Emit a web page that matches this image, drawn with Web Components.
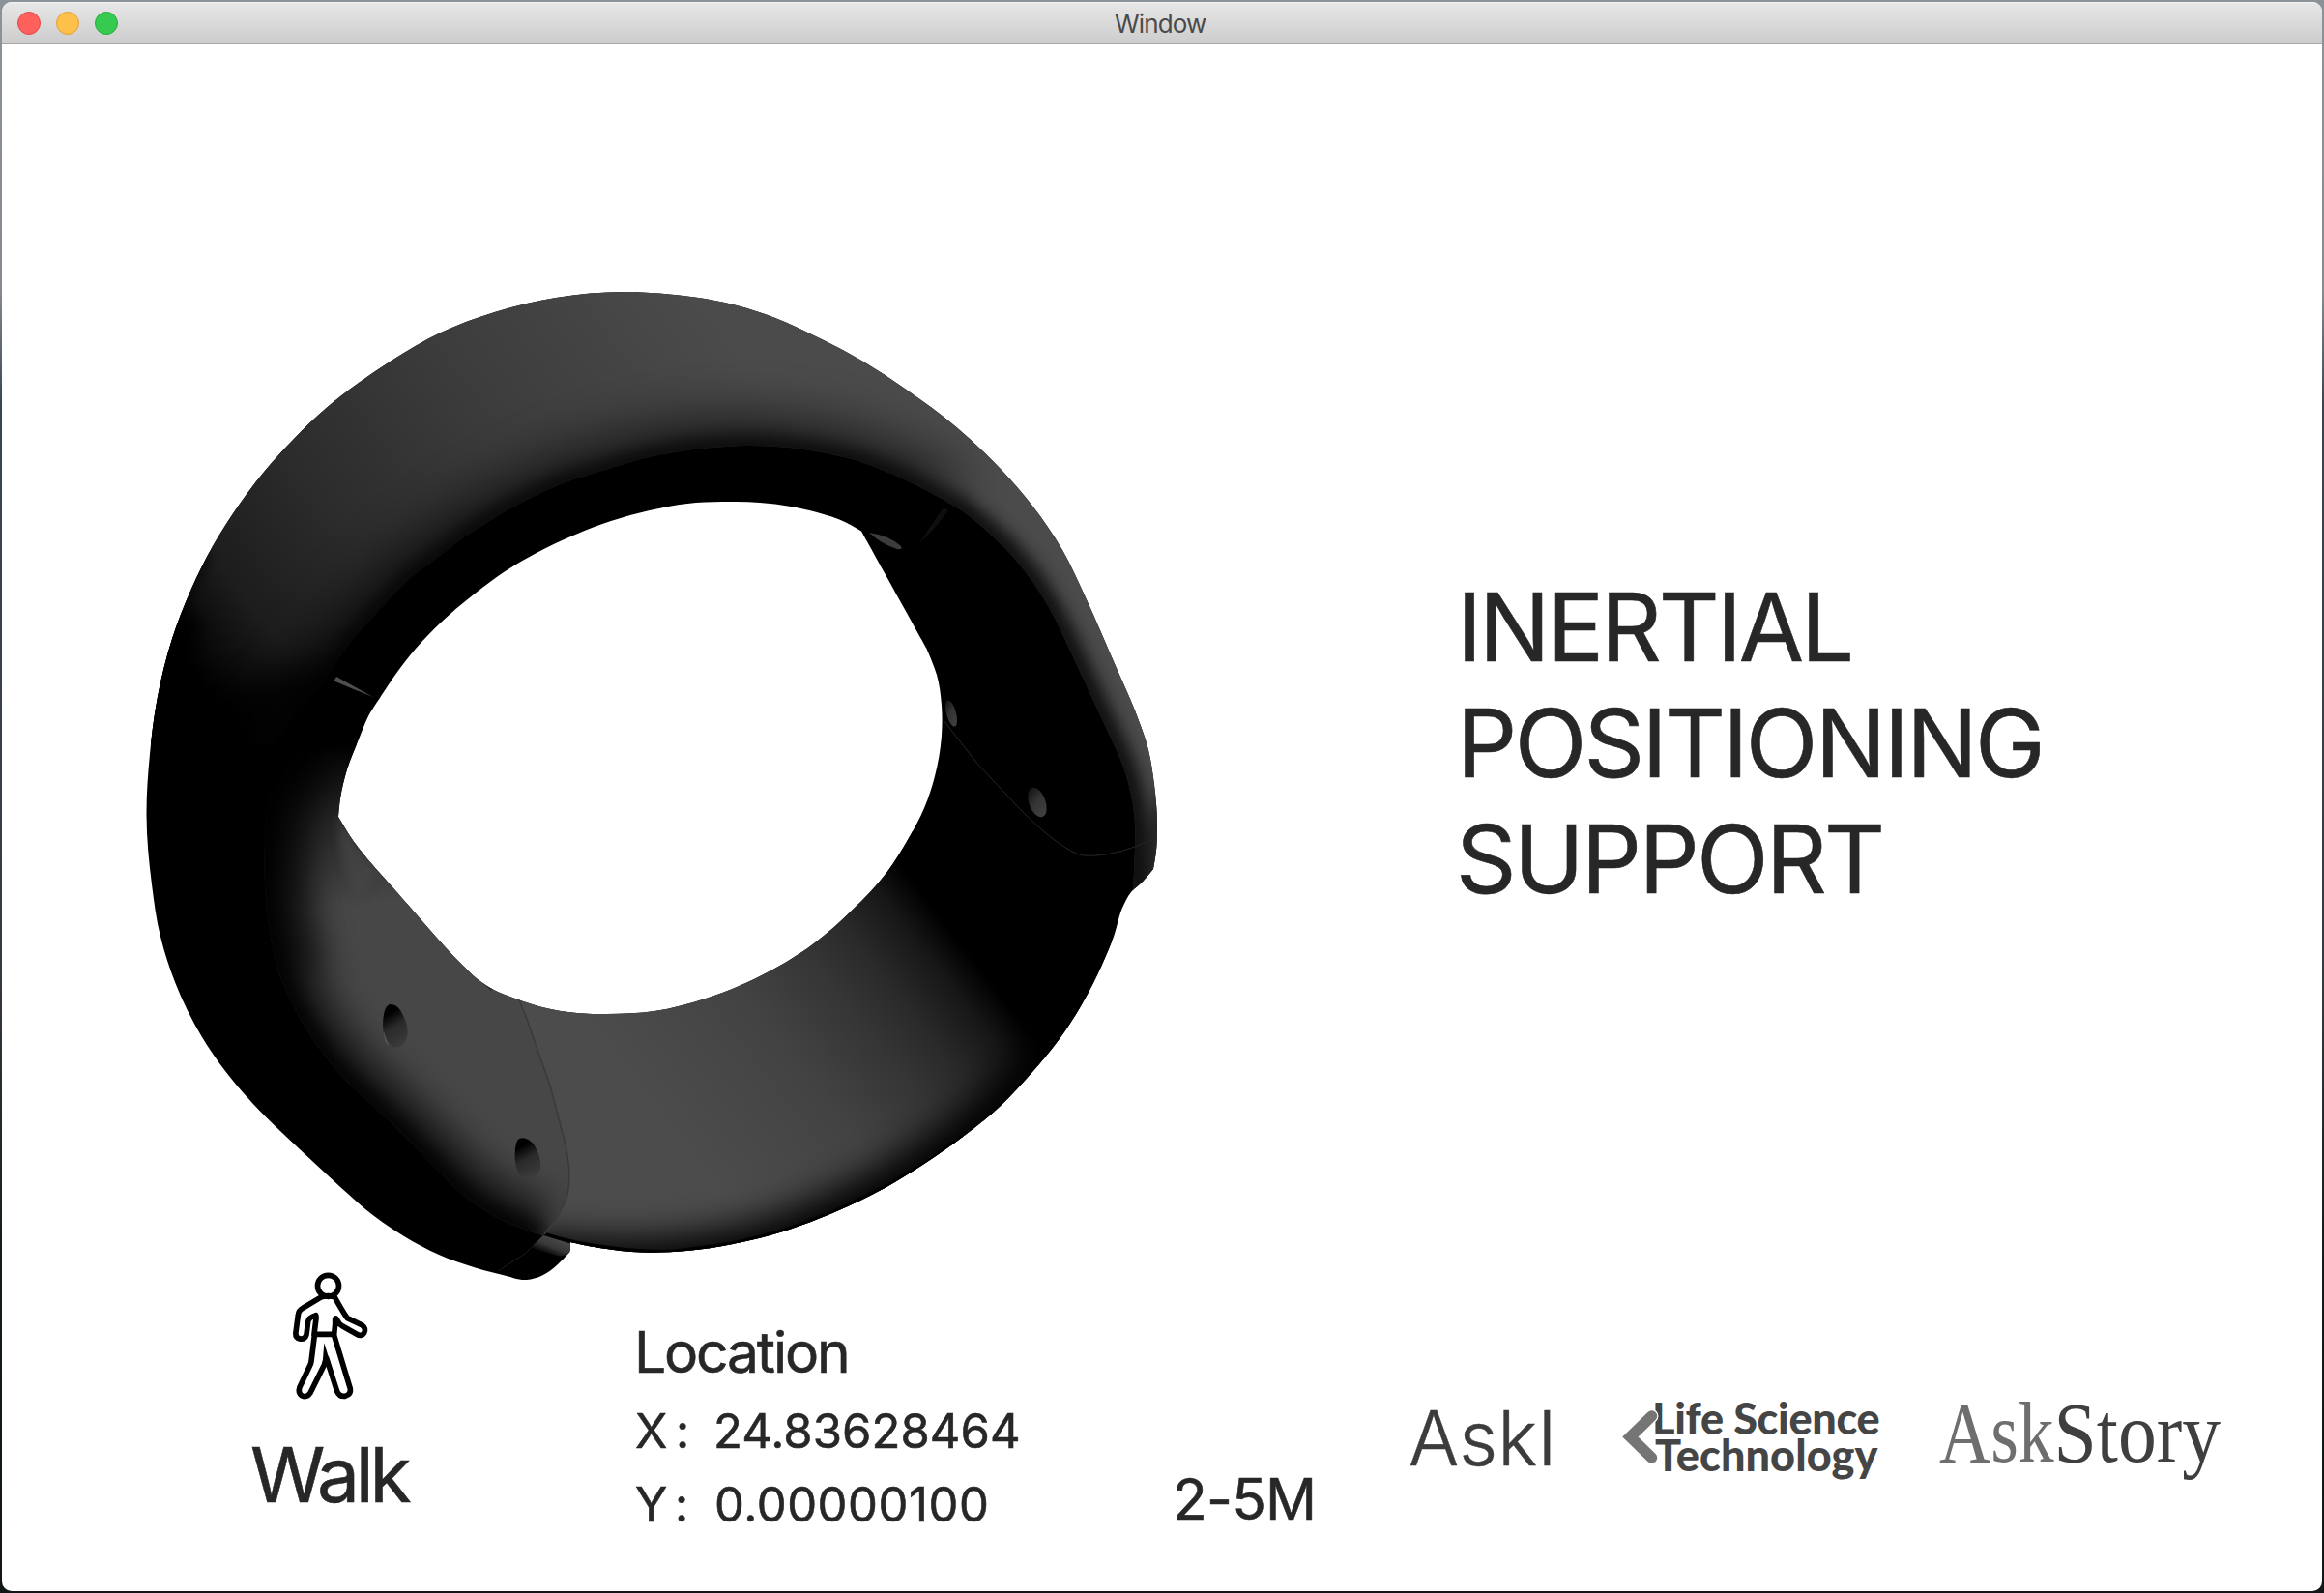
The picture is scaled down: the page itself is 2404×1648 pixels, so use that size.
<!DOCTYPE html>
<html lang="en">
<head>
<meta charset="utf-8">
<title>Window</title>
<style>
html,body{margin:0;height:100%;overflow:hidden}
body{font-family:Inter,"Liberation Sans",sans-serif;color:#272727;background:linear-gradient(180deg,#8b9298 0,#858b90 300px,#3a4450 420px,#353b42 1000px,#141d1b 1300px,#101716 100%)}
</style>
</head>
<body>
<app-window></app-window>
<script>
const define = (name, html, ready) => customElements.define(name, class extends HTMLElement {
  connectedCallback() {
    if (this.shadowRoot) return;
    const t = document.createElement('template');
    t.innerHTML = html;
    this.attachShadow({mode: 'open'}).append(t.content.cloneNode(true));
    if (ready) ready.call(this, this.shadowRoot);
  }
});

/* One line of text whose ink spans exactly the given width, by tracking or by horizontal scale. */
define('fit-text', `<style>
:host{display:block;white-space:pre}
span{display:inline-block;transform-origin:0 50%}
</style><span><slot></slot></span>`, function (root) {
  const w = +this.getAttribute('w'), span = root.querySelector('span'), text = this.textContent;
  this.style.width = w + 'px';
  const cs = getComputedStyle(this), ctx = document.createElement('canvas').getContext('2d');
  ctx.font = `${cs.fontWeight} ${cs.fontSize} ${cs.fontFamily}`;
  const m = ctx.measureText(text), left = m.actualBoundingBoxLeft, ink = left + m.actualBoundingBoxRight;
  if (this.hasAttribute('scale')) {
    const k = w / ink;
    span.style.transform = `translateX(${left * k}px) scaleX(${k})`;
  } else {
    span.style.letterSpacing = (w - ink) / (text.length - 1) + 'px';
    span.style.marginLeft = left + 'px';
  }
});

define('title-bar', `<style>
:host{display:flex;align-items:center;height:44px;box-sizing:border-box;padding:0 16px;background:linear-gradient(#f4f4f4 0,#e6e6e6 2px,#cdcdcd 100%);border-bottom:2px solid #a9a9a9;color:#4a4a4a;font-size:26px;line-height:40px}
.lights{display:flex;gap:16px;flex:1;padding-top:2px}
i{width:24px;height:24px;border-radius:50%;box-sizing:border-box;border:1px solid}
.r{background:#fe605b;border-color:#e2494a}.y{background:#fdc04a;border-color:#e0a03a}.g{background:#36ca50;border-color:#25ae38}
fit-text{margin:3px 3px 0 0}
.end{flex:1}
</style><div class="lights"><i class="r"></i><i class="y"></i><i class="g"></i></div><fit-text w="95">Window</fit-text><div class="end"></div>`);

/* Closed smooth curve through the points; a trailing "!" keeps a sharp corner. */
function smooth(list) {
  const p = list.trim().split(/\s+/).map(s => {
    const [x, y] = s.replace('!', '').split(',').map(Number);
    return {x, y, c: s.endsWith('!')};
  });
  const n = p.length, tan = i => {
    if (p[i].c) return [0, 0];
    const a = p[(i + n - 1) % n], o = p[i], b = p[(i + 1) % n];
    const la = Math.hypot(o.x - a.x, o.y - a.y), lb = Math.hypot(b.x - o.x, b.y - o.y), u = lb / la, v = la / lb;
    return [(o.x - a.x) * u + (b.x - o.x) * v, (o.y - a.y) * u + (b.y - o.y) * v];
  };
  const ctl = (i, j, s) => {
    const [tx, ty] = tan(i), L = Math.hypot(tx, ty) || 1, d = Math.hypot(p[j].x - p[i].x, p[j].y - p[i].y) / 3;
    return (p[i].x + s * tx / L * d).toFixed(1) + ' ' + (p[i].y + s * ty / L * d).toFixed(1);
  };
  let d = `M${p[0].x} ${p[0].y}`;
  for (let i = 0; i < n; i++) {
    const j = (i + 1) % n;
    d += `C${ctl(i, j, 1)} ${ctl(j, i, -1)} ${p[j].x} ${p[j].y}`;
  }
  return d + 'Z';
}
const OUT = smooth('646,302 682,303.5 719,307.5 760,315.5 802,329 850,351 893,374 936,402 990,442.5 1031,481 1067,522 1099,569 1122,616 1154,689 1174,735 1188,776 1194,812 1197,851 1196,880 1193,899! 1182,912 1170,923 1162,937 1152,969 1140,998 1118,1041 1095,1076 1067,1110 1035,1144 996,1176 956,1204 917,1228 861,1255 810,1274 758,1287 710,1294 664,1295.5 620,1291 590,1285! 589.5,1295! 577,1308 560,1320 545,1324 520,1319 490,1311 454,1298 418,1279 385,1256.5 351,1227 324,1202 292,1172 260,1140 233,1108 209,1073 181,1016 166,969 157,915 151.5,843 155,780 163,721 178,661 198,609 220,565 246,524 274,487 304,454 337,422.5 371,396 405,373 456,344 515,322 575,308');
const HOLE = smooth('747,519 711,521 672,528 632,539 594,553.5 555,572 521,592 490,615 456,644 430,671 409,698 393,722! 381,741 371,765 359,796 352,826 350,845! 367,872 383,892! 423,937 450,968 478,998 494,1013 509,1023 533,1033 561,1042 597,1048 628,1049 677,1046 730,1033 782,1012 842,976 882,941 917,903 940,867 956,836 967,803 974,761 974,730 969,698 958,670! 891,549.5! 875,540.5 845,530 818,524 786,520');
const RIM = 'M280 770L333 707Q350 682 365 661L393 630L424 598L484 553L519 531Q552 512 587 498L662 475Q715 462 770 461Q826 460 885 476Q940 494 996 529Q1040 562 1067 600Q1086 627 1099 656L1126 714L1158 783Q1174 822 1174.500 864L1172 925';
const FACE = 'M306 764Q284 790 278 823Q272 870 274 916Q276 960 288 1005Q302 1046 335 1091Q346 1106 359 1119L407 1164L470 1228Q505 1262 561 1278';
const SEAM = 'M536.500 1034Q545 1052 549 1066L569 1123L584 1180Q592 1215 587 1236Q580 1257 563 1277';
define('ring-model', `<style>:host{display:block}svg{display:block;overflow:visible}</style>
<svg width="1100" height="980" viewBox="130 300 1100 980">
<defs>
<clipPath id="body"><path clip-rule="evenodd" d="${OUT}${HOLE}"/></clipPath>
<clipPath id="top"><path d="${RIM}L1230 925L1230 280L120 280L120 770Z"/></clipPath>
<clipPath id="face"><path d="${FACE}L563 1277Q580 1257 587 1236Q592 1215 584 1180L569 1123L549 1066L536 1030L350 740Z"/></clipPath>
<clipPath id="strap"><path d="M536 1034Q545 1052 549 1066L569 1123L584 1180Q592 1215 587 1236Q580 1257 563 1277L600 1300H1150V860H900Z"/></clipPath>
<linearGradient id="gt" gradientUnits="userSpaceOnUse" x1="215" y1="720" x2="740" y2="330"><stop offset="0" stop-color="#000"/><stop offset=".14" stop-color="#1d1d1d"/><stop offset=".32" stop-color="#2b2b2b"/><stop offset=".6" stop-color="#3b3b3c"/><stop offset="1" stop-color="#4b4b4c"/></linearGradient>
<linearGradient id="gf" gradientUnits="userSpaceOnUse" x1="365" y1="765" x2="385" y2="935"><stop offset="0" stop-color="#000"/><stop offset=".45" stop-color="#262626"/><stop offset="1" stop-color="#474748"/></linearGradient>
<linearGradient id="gs" gradientUnits="userSpaceOnUse" x1="684" y1="1153" x2="964" y2="937"><stop offset="0" stop-color="#4c4c4d"/><stop offset=".4" stop-color="#434344"/><stop offset=".63" stop-color="#353535"/><stop offset=".76" stop-color="#2a2a2a"/><stop offset=".9" stop-color="#171717"/><stop offset="1" stop-color="#000"/></linearGradient>
<linearGradient id="gh" x1=".2" y1="0" x2=".55" y2="1"><stop offset=".2" stop-color="#000"/><stop offset=".55" stop-color="#2a2a2a"/><stop offset="1" stop-color="#3a3a3a"/></linearGradient>
<linearGradient id="gr" x1=".2" y1="0" x2=".5" y2="1"><stop offset="0" stop-color="#111"/><stop offset=".5" stop-color="#343434"/><stop offset="1" stop-color="#404040"/></linearGradient>
<linearGradient id="gtab" gradientUnits="userSpaceOnUse" x1="580" y1="1281" x2="573" y2="1299"><stop offset="0" stop-color="#4a4a4a"/><stop offset=".6" stop-color="#383838"/><stop offset="1" stop-color="#0a0a0a"/></linearGradient>
<filter id="b5" filterUnits="userSpaceOnUse" x="0" y="150" width="1400" height="1300"><feGaussianBlur stdDeviation="5"/></filter>
<filter id="b10" filterUnits="userSpaceOnUse" x="0" y="150" width="1400" height="1300"><feGaussianBlur stdDeviation="9"/></filter>
<filter id="b20" filterUnits="userSpaceOnUse" x="0" y="150" width="1400" height="1300"><feGaussianBlur stdDeviation="18"/></filter>
<filter id="b28" filterUnits="userSpaceOnUse" x="0" y="150" width="1400" height="1300"><feGaussianBlur stdDeviation="26"/></filter>
</defs>
<g clip-path="url(#body)" fill="none">
<rect x="130" y="280" width="1100" height="1060" fill="#000"/>
<g clip-path="url(#top)">
<rect x="130" y="280" width="1100" height="660" fill="url(#gt)"/>
<path d="${RIM}" stroke="#000" stroke-width="15" filter="url(#b10)" opacity=".95"/>
<path d="M280 770L333 707L365 661L393 630L424 598L484 553L519 531L587 498L662 475Q715 462 770 461Q826 460 885 476Q940 494 980 519" stroke="#000" stroke-width="60" filter="url(#b28)" opacity=".62"/>
<path d="M980 519L1035 562L1067 600L1099 656L1126 714L1158 783Q1174 822 1174 864L1172 940" stroke="#000" stroke-width="26" filter="url(#b10)" opacity=".4"/>
<path d="M1220 800L1196 860L1185 940" stroke="#000" stroke-width="24" filter="url(#b10)" opacity=".5"/>
<path d="M150 790L168 710L190 636" stroke="#000" stroke-width="40" filter="url(#b10)"/>
<path d="M182 660L200 606L216 572" stroke="#000" stroke-width="6" filter="url(#b5)" opacity=".6"/>
<path d="M190 762L345 700" stroke="#000" stroke-width="46" filter="url(#b20)" opacity=".85"/>
</g>
<g clip-path="url(#strap)">
<rect x="500" y="850" width="700" height="460" fill="url(#gs)"/>
<path d="M540 1302Q690 1324 812 1284Q965 1226 1072 1118L1125 1050" stroke="#000" stroke-width="56" filter="url(#b20)"/>
<path d="M563 1277Q590 1286 620 1290Q664 1297 699 1295L758 1287L810 1274L861 1255L917 1228L956 1205L996 1176" stroke="#000" stroke-width="5"/>
</g>
<g clip-path="url(#face)">
<rect x="250" y="740" width="360" height="560" fill="url(#gf)"/>
<path d="${FACE}" stroke="#000" stroke-width="24" filter="url(#b10)" opacity=".9"/>
<path d="${FACE}" stroke="#000" stroke-width="76" filter="url(#b20)" opacity=".64"/>
<path d="M310 760Q286 820 288 900Q290 960 310 1010" stroke="#000" stroke-width="60" filter="url(#b20)" opacity=".5"/>
</g>
<path d="M350 843L367 870L392 905L372 930Q350 900 350 843Z" fill="#464647" filter="url(#b5)" opacity=".7"/>
<path d="${SEAM}" stroke="#3a3a3b" stroke-width="1.500"/>
<path d="M563 1277L543 1297L515 1315" stroke="#1a1a1a" stroke-width="1"/>
<path d="M562 1278L592 1287L590 1294Q584 1301 576 1299L549 1291Z" fill="url(#gtab)"/>
<path d="M493 1011L510 1022L508 1025Z" fill="#2a2a2a"/>
<path d="M976 745L1011 790L1055 837Q1098 880 1120 885Q1144 887 1174 876L1195 867" stroke="#262626" stroke-width="1"/>
</g>
<path d="M403 1039Q409 1038 414 1045Q424 1062 421 1073Q416 1086 406 1083Q396 1074 396 1062Q396 1042 403 1039Z" fill="url(#gh)"/>
<path d="M397 1067Q397 1079 402 1082Q399 1074 397 1067Z" fill="#555"/>
<path d="M537 1178Q545 1175 553 1185Q562 1202 558 1212Q549 1222 538 1216Q531 1206 533 1188Q534 1180 537 1178Z" fill="url(#gh)"/>
<ellipse cx="1073" cy="830" rx="8.500" ry="16" transform="rotate(-20 1073 830)" fill="url(#gr)"/>
<ellipse cx="984" cy="738" rx="5" ry="14" transform="rotate(-15 984 738)" fill="url(#gr)"/>
<path d="M899 551Q920 554 932 565Q934 569 928 568Q912 563 899 551Z" fill="#3c3c3c"/>
<path d="M976 525L981 528Q965 550 950 563Z" fill="#0e0e0e"/>
<path d="M348 700L345.500 704.500Q365 713 386 721Z" fill="#4d4d4f"/>
</svg>`);

define('walk-icon', `<style>:host{display:block}svg{display:block}</style>
<svg width="100" height="140" viewBox="225 66 300 420" fill="none" stroke="#000" stroke-width="17" stroke-linejoin="round" stroke-linecap="round">
<circle cx="358.500" cy="121" r="33"/>
<path d="M338 155L281 189Q266 197 265 212L257.500 268Q257 283 272 285.500Q287 287 291 272L296 232Q298 219 320 212Q322 215 321 222L315 271H377L380 240V224Q382 216 390 234Q394 241 402 245L446 270Q462 280 470 267Q477 253 464 243L418 221Q410 212 378 155Q358 149 338 155Z"/>
<path d="M316 275L306 355Q305 364 300 372L270 435Q264 452 276 461Q292 469 303 453L346 366L353 345L386 448Q393 465 411 463Q430 457 427 440L377 275"/>
<path d="M346 298L341 360L352 366L364 356Z" fill="#000" stroke="none"/>
</svg>`);

define('activity-state', `<style>
:host{display:block;width:165px}
walk-icon{margin:32px 0 23.500px 35px}
fit-text{font-size:78.500px;line-height:100px}
</style><walk-icon></walk-icon><fit-text w="164.500">Walk</fit-text>`);

define('location-panel', `<style>
:host{display:block;width:396px;padding-top:79px}
.h{font-size:58.700px;line-height:80px;margin:0 0 4px 3px}
.row{display:flex;font-size:49px;line-height:76px}
.l{width:83px}
</style><fit-text class="h" w="215">Location</fit-text>
<div class="row"><div class="l"><fit-text w="52">X :</fit-text></div><fit-text w="312">24.83628464</fit-text></div>
<div class="row"><div class="l"><fit-text w="51">Y :</fit-text></div><fit-text w="279">0.00000100</fit-text></div>`);

define('partner-logos', `<style>
:host{display:flex;align-items:flex-start;-webkit-text-stroke:0}
.a{font-weight:300;font-size:78.500px;line-height:100px;color:#3c3c3c;margin-top:157.500px;-webkit-text-stroke:.5px}
.l{display:flex;margin:168px 0 0 73px;font:900 45px/38px Lato,sans-serif;color:#454545}
svg{display:block;overflow:visible;margin-top:8px;position:relative}
.s{display:flex;gap:4px;margin:152px 0 0 62px;font:89px/100px "Liberation Serif",serif;color:#3f3f3f}
.k{color:#6e6e6e}
</style>
<fit-text class="a" scale w="144">AskI</fit-text>
<div class="l"><svg width="36" height="60" viewBox="0 0 36 60" fill="none" stroke-linecap="round"><path d="M32.500 9L10.500 30.500L32.500 52" stroke="#fff" stroke-width="14"/><path d="M32.500 9L10.500 30.500L32.500 52" stroke="#757575" stroke-width="11.500"/></svg>
<div><fit-text w="231.500">Life Science</fit-text><fit-text w="231.500">Technology</fit-text></div></div>
<div class="s"><fit-text class="k" scale w="119">Ask</fit-text><fit-text scale w="168.500">Story</fit-text></div>`);

define('app-window', `<style>
:host{display:flex;flex-direction:column;width:2400px;height:1644px;margin:2px;border-radius:10px;overflow:hidden;background:#fff}
.hero{display:flex;height:1234px}
ring-model{margin:254px 0 0 128px;width:1100px}
h1{margin:542.500px 0 0 285px;font-weight:400;font-size:97.600px;line-height:120px}
h1 :last-child{margin-left:-4px}
h1,footer{-webkit-text-stroke:.6px}
footer{display:flex;align-items:flex-start;padding-left:258px}
location-panel{margin-left:233px}
.range{margin:230.500px 0 0 163px;font-size:58.700px;line-height:80px}
partner-logos{margin-left:102px}
</style>
<title-bar></title-bar>
<div class="hero"><ring-model></ring-model><h1><fit-text w="399">INERTIAL</fit-text><fit-text w="595">POSITIONING</fit-text><fit-text w="435">SUPPORT</fit-text></h1></div>
<footer><activity-state></activity-state><location-panel></location-panel><fit-text class="range" w="140">2-5M</fit-text><partner-logos></partner-logos></footer>`);
</script>
</body>
</html>
